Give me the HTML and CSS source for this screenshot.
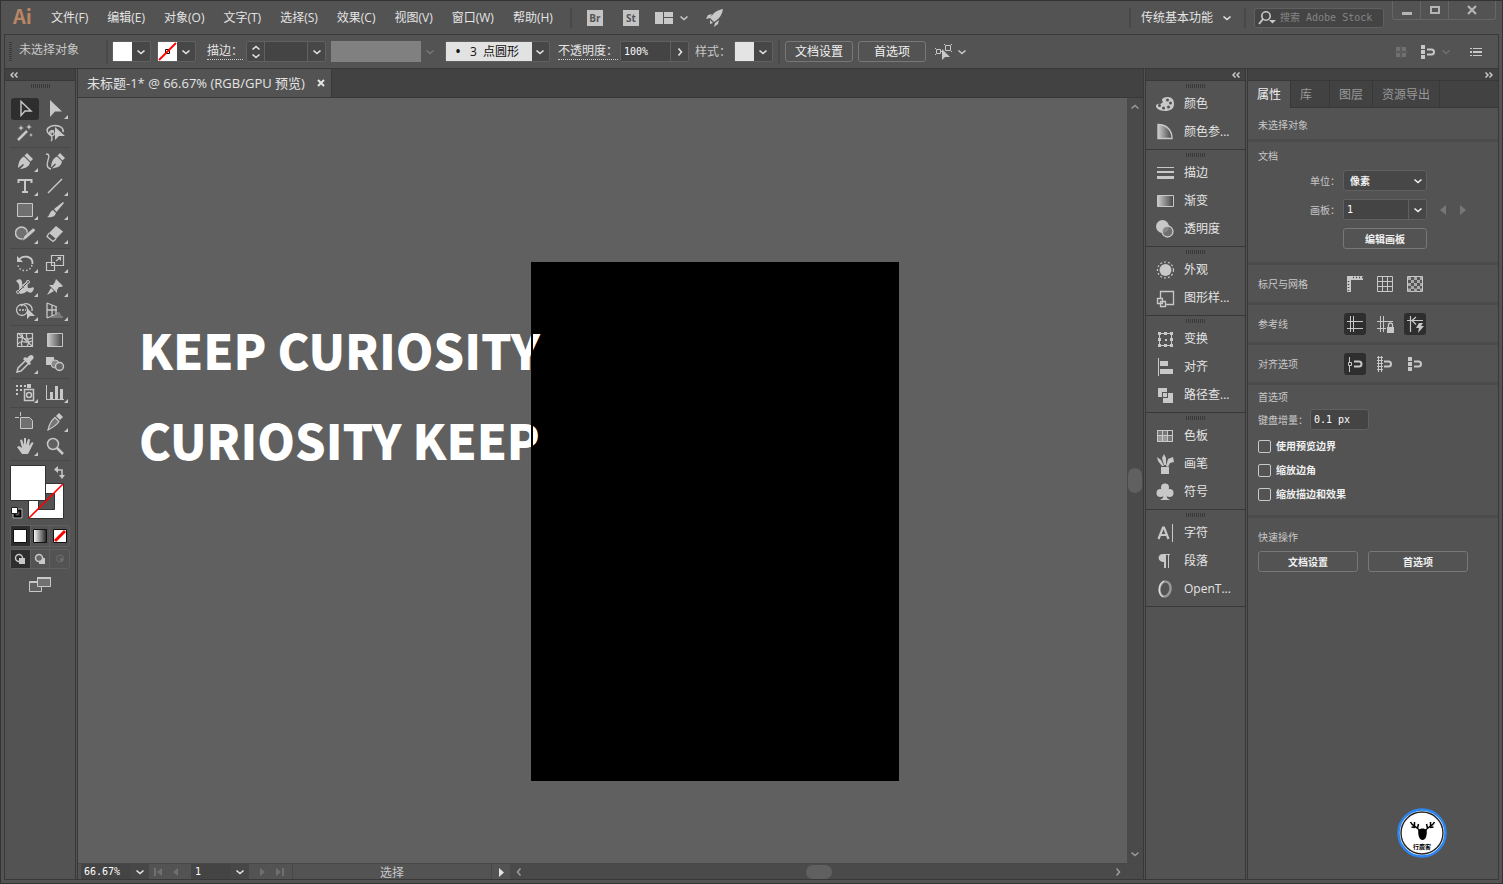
FILE: index.html
```html
<!DOCTYPE html>
<html lang="zh-CN">
<head>
    <meta charset="UTF-8">
    <meta name="viewport" content="width=device-width, initial-scale=1.0">
    <title>未标题-1* @ 66.67% (RGB/GPU 预览)</title>
    <link rel="stylesheet" href="styles.css">
</head>
<body>
    <!-- shared icons -->
    <svg class="defs" width="0" height="0" aria-hidden="true">
        <symbol id="down" viewBox="0 0 10 10"><path d="M1.500 3.500L5 6.500L8.500 3.500" fill="none" stroke="currentColor" stroke-width="1.600"/></symbol>
        <symbol id="right" viewBox="0 0 10 10"><path d="M3.500 1.500L6.500 5L3.500 8.500" fill="none" stroke="currentColor" stroke-width="1.600"/></symbol>
        <symbol id="left" viewBox="0 0 10 10"><path d="M6.500 1.500L3.500 5L6.500 8.500" fill="none" stroke="currentColor" stroke-width="1.600"/></symbol>
        <symbol id="up" viewBox="0 0 10 10"><path d="M1.500 6.500L5 3.500L8.500 6.500" fill="none" stroke="currentColor" stroke-width="1.600"/></symbol>
        <symbol id="collapse" viewBox="0 0 8 6"><path d="M3.500 .5L1 3l2.500 2.500M7.500 .5L5 3l2.500 2.500" fill="none" stroke="currentColor" stroke-width="1.500"/></symbol>
        <symbol id="expand" viewBox="0 0 8 6"><path d="M.5 .5L3 3L.5 5.500M4.500 .5L7 3L4.500 5.500" fill="none" stroke="currentColor" stroke-width="1.500"/></symbol>
        <symbol id="snap" viewBox="0 0 20 20"><path d="M3 3h4v4H3zM3 8h4v4H3zM3 13h4v4H3z"/><path d="M9 7.500h4.500a2.500 2.500 0 0 1 0 5H9" fill="none" stroke="currentColor" stroke-width="2"/></symbol>
        <linearGradient id="fade"><stop offset="0" stop-color="#ccc"/><stop offset="1" stop-color="#444"/></linearGradient>
        <linearGradient id="fadeWhite"><stop offset="0" stop-color="#fff"/><stop offset="1" stop-color="#222"/></linearGradient>
    </svg>

    <header class="menubar">
        <span class="logo">Ai</span>
        <nav class="menu">
            <button>文件(F)</button>
            <button>编辑(E)</button>
            <button>对象(O)</button>
            <button>文字(T)</button>
            <button>选择(S)</button>
            <button>效果(C)</button>
            <button>视图(V)</button>
            <button>窗口(W)</button>
            <button>帮助(H)</button>
        </nav>
        <div class="launch">
            <button class="badge">Br</button>
            <button class="badge">St</button>
            <button class="arrange" aria-label="排列文档"><svg width="18" height="12" viewBox="0 0 18 12"><path d="M0 0h8v12H0zM9 0h9v5H9zM9 6h9v6H9z"/></svg><svg width="10" height="10"><use href="#down"/></svg></button>
            <button aria-label="GPU 性能"><svg width="20" height="20" viewBox="0 0 20 20"><path d="M18 1C12 2 8 5 5 10l4 4c5-3 8-7 9-13zM7 6L3 7l-2 4 4-1zM14 12l-1 4-4 3 1-4zM5 12l3 3-3 1z"/></svg></button>
        </div>
        <div class="menubar-right">
            <button class="workspace-switch">传统基本功能 <svg width="10" height="10"><use href="#down"/></svg></button>
            <label class="search">
                <svg width="18" height="16" viewBox="0 0 18 16"><circle cx="8" cy="6" r="4.200" fill="none" stroke="currentColor" stroke-width="1.600"/><path d="M5 9l-4 5" stroke="currentColor" stroke-width="2"/><path d="M11 10h7l-3.500 3.500z"/></svg>
                <input type="text" placeholder="搜索 Adobe Stock" aria-label="搜索 Adobe Stock">
            </label>
            <div class="window-buttons">
                <button aria-label="最小化"><svg width="12" height="12" viewBox="0 0 12 12"><path d="M1 8h10v3H1z"/></svg></button>
                <button aria-label="最大化"><svg width="12" height="12" viewBox="0 0 12 12"><path d="M2 3h8v6H2z" fill="none" stroke="currentColor" stroke-width="2"/></svg></button>
                <button class="close" aria-label="关闭"><svg width="12" height="12" viewBox="0 0 12 12"><path d="M2 2l8 8M10 2l-8 8" stroke="currentColor" stroke-width="2.200"/></svg></button>
            </div>
        </div>
    </header>

    <div class="frame">
        <section class="control">
            <i class="grip-v"></i>
            <span class="selection">未选择对象</span>
            <button class="swatch" aria-label="填色"><i class="chip white"></i><svg width="10" height="10"><use href="#down"/></svg></button>
            <button class="swatch" aria-label="描边颜色"><i class="chip white"><svg width="19" height="19" viewBox="0 0 19 19"><path d="M7.500 7.500h4v4h-4z" fill="none" stroke="#111"/><path d="M1 18L18 1" stroke="#f00" stroke-width="1.800"/></svg></i><svg width="10" height="10"><use href="#down"/></svg></button>
            <label class="dotted" for="stroke">描边：</label>
            <span class="combo stroke">
                <button class="step" aria-label="增减"><svg width="10" height="8" viewBox="0 1 10 8"><use href="#up" width="10" height="10"/></svg><svg width="10" height="8" viewBox="0 1 10 8"><use href="#down" width="10" height="10"/></svg></button>
                <input id="stroke" type="text">
                <button aria-label="粗细"><svg width="10" height="10"><use href="#down"/></svg></button>
            </span>
            <button class="profile" aria-label="变量宽度" disabled><i></i><svg width="10" height="10"><use href="#down"/></svg></button>
            <button class="brush"><span><b>•</b>3<em>点圆形</em></span><svg width="10" height="10"><use href="#down"/></svg></button>
            <label class="dotted opacity-label" for="opacity">不透明度：</label>
            <span class="combo opacity"><input id="opacity" type="text" value="100%"><button aria-label="不透明度滑块"><svg width="10" height="10"><use href="#right"/></svg></button></span>
            <span class="style-label">样式：</span>
            <button class="swatch style-swatch" aria-label="图形样式"><i class="chip"></i><svg width="10" height="10"><use href="#down"/></svg></button>
            <div class="control-buttons">
                <button class="outline">文档设置</button>
                <button class="outline">首选项</button>
            </div>
            <button class="similar" aria-label="选择类似的对象"><svg width="18" height="18" viewBox="0 0 18 18"><path d="M1.500 6.500h4v4h-4zM10.500 2.500h5v5h-5zM5.500 8.500h2M0 5.500h1M0 11.500h1M9 1.500h1M16 1.500h1M16 8.500h1" fill="none" stroke="currentColor"/><path d="M7 6v11l3-3h5z"/></svg><svg width="10" height="10"><use href="#down"/></svg></button>
            <div class="control-right">
                <button class="dim" aria-label="对齐像素"><svg width="14" height="14" viewBox="0 0 14 14"><path d="M2 2h4v4H2zM8 2h4v4H8zM2 8h4v4H2zM8 8h4v4H8z"/><path d="M7 0v14M0 7h14" stroke="currentColor" opacity=".5"/></svg></button>
                <button aria-label="对齐"><svg width="20" height="20"><use href="#snap"/></svg></button>
                <button class="dim snap-menu" aria-label="对齐选项"><svg width="10" height="10"><use href="#down"/></svg></button>
                <button class="list" aria-label="面板菜单"><svg width="12" height="10" viewBox="0 0 12 10"><path d="M0 1h2v1H0zM3 1h9v1H3zM0 4h2v2H0zM3 4h9v2H3zM0 8h2v1H0zM3 8h9v1H3z"/></svg></button>
            </div>
        </section>

        <main class="workspace">
            <aside class="toolbox">
                <button class="dock-head" aria-label="折叠"><svg width="8" height="6"><use href="#collapse"/></svg></button>
                <i class="grip"></i>
                <div class="tools">
                    <button class="tool active" aria-label="选择工具"><svg viewBox="0 0 20 20"><path d="M6 2.500v14l4-4.500h6z" fill="none" stroke="currentColor" stroke-width="1.400"/></svg></button>
                    <button class="tool more" aria-label="直接选择工具"><svg viewBox="0 0 20 20"><path d="M5 1v17l5-5.500h7z"/></svg></button>
                    <button class="tool" aria-label="魔棒工具"><svg viewBox="0 0 20 20"><path d="M3 17L12 8" stroke="currentColor" stroke-width="2.500"/><path d="M6 2l.8 2.200L9 5l-2.200.8L6 8l-.8-2.200L3 5l2.200-.8zM14 1l.8 2.200L17 4l-2.200.8L14 7l-.8-2.200L11 4l2.200-.8zM16 10l.6 1.400L18 12l-1.400.6L16 14l-.6-1.400L14 12l1.400-.6z"/></svg></button>
                    <button class="tool" aria-label="套索工具"><svg viewBox="0 0 20 20"><path d="M4 11C-1 6 5 2.500 10 2.500S19 5 18 9" fill="none" stroke="currentColor" stroke-width="1.500"/><path d="M9 8C5 7 3 10 5 12s5 0 4-2-4-1-3 2 2 4 0 6" fill="none" stroke="currentColor" stroke-width="1.300"/><path d="M10 4v13l4-4h6z"/></svg></button>
                </div>
                <div class="tools">
                    <button class="tool more" aria-label="钢笔工具"><svg viewBox="0 0 20 20"><path d="M12 1l6 6-2.500 2.500-6-6zM9 4.500l6 6c-1 4-4 6-10 6.500L9 13l-1-1-5 4c.5-6 2-9.500 6-11.500z"/></svg></button>
                    <button class="tool" aria-label="曲率工具"><svg viewBox="0 0 20 20"><path d="M15 1l5 5-2.500 2.500-5-5zM12 4.500l5 5c-1 4-3 6-10 7l4-4-1-1-4 4c.5-6 2-9 6-11z"/><path d="M1 2c4 0 3 3 2 6-1 4-2 8 3 9" fill="none" stroke="currentColor" stroke-width="1.300"/></svg></button>
                    <button class="tool more" aria-label="文字工具"><svg viewBox="0 0 20 20"><path d="M3.500 7V4h13v3M10 4v12M7 16h6" fill="none" stroke="currentColor" stroke-width="2"/></svg></button>
                    <button class="tool more" aria-label="直线段工具"><svg viewBox="0 0 20 20"><path d="M3 17L17 3" stroke="currentColor" stroke-width="1.500"/></svg></button>
                    <button class="tool more" aria-label="矩形工具"><svg viewBox="0 0 20 20"><path d="M2.500 3.500h15v13h-15z" fill="#707070" stroke="currentColor"/></svg></button>
                    <button class="tool more" aria-label="画笔工具"><svg viewBox="0 0 20 20"><path d="M18 2L9 9l2.500 3L19 3zM8 10l3 3c-1 4-5 5-9 4 3-1 2-5 6-7z"/></svg></button>
                    <button class="tool more" aria-label="Shaper 工具"><svg viewBox="0 0 20 20"><circle cx="6.500" cy="9" r="6" fill="#707070" stroke="currentColor" stroke-width="1.500"/><path d="M7 17l2-5 9-8 3 2-10 9z" stroke="#535353" stroke-width=".6"/></svg></button>
                    <button class="tool more" aria-label="橡皮擦工具"><svg viewBox="0 0 20 20"><path d="M11 2l7 5.500-7 7.500-7-6z"/><path d="M4 9l-2 3.500 6 5 3-2.500" fill="none" stroke="currentColor" stroke-width="1.300"/></svg></button>
                </div>
                <div class="tools">
                    <button class="tool more" aria-label="旋转工具"><svg viewBox="0 0 20 20"><path d="M4 7c3-5 14-5 13.500 4" fill="none" stroke="currentColor" stroke-width="1.800"/><path d="M2 3v6h6z"/><path d="M17 12c-2 8-13 7-14 0" fill="none" stroke="currentColor" stroke-width="1.500" stroke-dasharray="1.500 2"/></svg></button>
                    <button class="tool more" aria-label="比例缩放工具"><svg viewBox="0 0 20 20"><path d="M6.500 2.500h12v10h-12zM1.500 9.500h8v8h-8zM11 8l5-4" fill="none" stroke="currentColor" stroke-width="1.200"/><path d="M12 4h4v4z"/></svg></button>
                    <button class="tool more" aria-label="宽度工具"><svg viewBox="0 0 20 20"><path d="M1 4c4-4 7-1 6 4 2-1 4-3 5-5l2 1c-2 5-2 7 0 7 2 1 3-2 5 0-1 5-4 6-7 3-3 3-7 4-9 1 2-4 2-8-2-11z"/><path d="M3 15L14 4" stroke="#444"/><circle cx="3" cy="15" r="1.500" fill="#535353" stroke="currentColor"/><circle cx="8" cy="10" r="1.500" fill="#535353" stroke="currentColor"/><circle cx="13" cy="5" r="1.500" fill="#535353" stroke="currentColor"/></svg></button>
                    <button class="tool more" aria-label="操控变形工具"><svg viewBox="0 0 20 20"><path d="M11 2l7 7-2 1-2 0-2 3v3l-8-8h4l2-3zM6 11l3 3-7 4z"/></svg></button>
                    <button class="tool more" aria-label="形状生成器工具"><svg viewBox="0 0 20 20"><circle cx="7" cy="9" r="5.500" fill="none" stroke="currentColor" stroke-width="1.300"/><path d="M6 5c5-5 12-1 11 5" fill="none" stroke="currentColor" stroke-width="1.300"/><path d="M4 9h7" stroke="currentColor" stroke-width="1.300" stroke-dasharray="2 1"/><path d="M12 7v11l3-3h5z"/></svg></button>
                    <button class="tool more" aria-label="透视网格工具"><svg viewBox="0 0 20 20"><path d="M2 2v15M7 4v11M11 6v8M2 2l10 4M2 9h10M2 17l10-4" fill="none" stroke="currentColor" stroke-width="1.300"/><path d="M12 12h3M10 14h6M6 16h12" stroke="#888" stroke-width="1.300"/></svg></button>
                </div>
                <div class="tools">
                    <button class="tool" aria-label="网格工具"><svg viewBox="0 0 20 20"><path d="M2.500 3.500h15v13h-15zM3 8c5-3 5 4 14 0M3 14c4-6 7 1 14-3M6 3c5 5-2 8 1 13M12 3c-3 5 5 8 0 13M3 3l14 13" fill="none" stroke="currentColor" stroke-width="1.200"/></svg></button>
                    <button class="tool" aria-label="渐变工具"><svg viewBox="0 0 20 20"><path d="M2.500 3.500h15v13h-15z" fill="url(#fade)" stroke="currentColor"/></svg></button>
                    <button class="tool more" aria-label="吸管工具"><svg viewBox="0 0 20 20"><path d="M10 7l-7 7-1 4 4-1 7-7" fill="none" stroke="currentColor" stroke-width="1.500"/><path d="M14 2c3-3 6 1 4 3l-3 3 1 2-2 1-6-6 2-2 2 1z"/></svg></button>
                    <button class="tool" aria-label="混合工具"><svg viewBox="0 0 20 20"><path d="M1 3h8v8H1z"/><circle cx="10" cy="10" r="4" fill="#888" stroke="currentColor"/><circle cx="14.500" cy="12.500" r="4" fill="#666" stroke="currentColor" stroke-width="1.400"/></svg></button>
                </div>
                <div class="tools">
                    <button class="tool more" aria-label="符号喷枪工具"><svg viewBox="0 0 20 20"><path d="M1 2h2v2H1zM5 2h2v2H5zM9 2h2v2H9zM1 6h2v2H1zM5 6h2v2H5zM1 10h2v2H1zM12 1h4v4h-4z"/><path d="M9.500 6.500h9v11h-9z" fill="none" stroke="currentColor" stroke-width="1.500"/><circle cx="14" cy="12" r="2.500" fill="none" stroke="currentColor" stroke-width="1.500"/></svg></button>
                    <button class="tool more" aria-label="柱形图工具"><svg viewBox="0 0 20 20"><path d="M1 2h1v14h17v1H1zM5 9h3v7H5zM10 3h3v13h-3zM15 6h3v10h-3z"/></svg></button>
                </div>
                <div class="tools">
                    <button class="tool" aria-label="画板工具"><svg viewBox="0 0 20 20"><path d="M5.500 0v4M0 5.500h4" stroke="currentColor"/><path d="M5.500 5.500h9l3 3v8h-12z" fill="#707070" stroke="currentColor"/></svg></button>
                    <button class="tool more" aria-label="切片工具"><svg viewBox="0 0 20 20"><path d="M14 1l4 4-3 3-4-4z"/><path d="M10 5.500L14 9.500Q11 14 3 18 5 9 10 5.500z" fill="#777" stroke="currentColor" stroke-width="1.200"/></svg></button>
                    <button class="tool more" aria-label="抓手工具"><svg viewBox="0 0 20 20"><path d="M7 18L2 11l2-1 3 2L5 4l2-.5L9 9V2h2v7l2-6 2 .5L14 10l3-4 1.500 1L15 14l-2 4z"/></svg></button>
                    <button class="tool" aria-label="缩放工具"><svg viewBox="0 0 20 20"><circle cx="8" cy="8" r="5.500" fill="#606060" stroke="currentColor" stroke-width="1.500"/><path d="M12 12l6 6" stroke="currentColor" stroke-width="2.500"/></svg></button>
                </div>
                <svg class="fill-stroke" width="60" height="60" viewBox="0 0 60 60">
                    <path d="M18.500 20.500h35v35h-35z" fill="#fff" stroke="#333"/>
                    <path d="M28.500 30.500h16v16h-16z" fill="#535353" stroke="#333"/>
                    <path d="M19 55L53 21" stroke="#f00" stroke-width="1.600"/>
                    <path d="M.5 2.500h35v35H.5z" fill="#fff" stroke="#333"/>
                    <path d="M47 7h5v6" fill="none" stroke="#c8c8c8" stroke-width="1.500"/>
                    <path d="M48 3v7l-4-3.500zM49 12h6l-3 4z" fill="#c8c8c8"/>
                    <path d="M4.500 47.500h6v6h-6z" fill="none" stroke="#000" stroke-width="2"/>
                    <path d="M3 46h9v9H3z" fill="none" stroke="#bbb" stroke-width=".8"/>
                    <path d="M1.500 44.500h6v6h-6z" fill="#fff" stroke="#222"/>
                </svg>
                <div class="modes">
                    <button class="on" aria-label="颜色"><svg width="14" height="14" viewBox="0 0 14 14"><path d="M.5 .5h13v13H.5z" fill="#fff" stroke="#111"/></svg></button>
                    <button aria-label="渐变"><svg width="14" height="14" viewBox="0 0 14 14"><path d="M.5 .5h13v13H.5z" fill="url(#fadeWhite)" stroke="#111"/></svg></button>
                    <button aria-label="无"><svg width="14" height="14" viewBox="0 0 14 14"><path d="M.5 .5h13v13H.5z" fill="#fff" stroke="#111"/><path d="M2 12L12 2" stroke="#f00" stroke-width="3"/></svg></button>
                </div>
                <div class="modes small">
                    <button class="on" aria-label="正常绘图"><svg width="12" height="12" viewBox="0 0 12 12"><circle cx="5" cy="5" r="3.500" fill="none" stroke="currentColor" stroke-width="1.500"/><path d="M5 5h6v6H5z"/></svg></button>
                    <button aria-label="背面绘图"><svg width="12" height="12" viewBox="0 0 12 12"><path d="M5 5h6v6H5z"/><circle cx="5" cy="5" r="3.500" fill="#666" stroke="currentColor" stroke-width="1.500"/></svg></button>
                    <button class="dim" aria-label="内部绘图" disabled><svg width="12" height="12" viewBox="0 0 12 12"><circle cx="6" cy="5.500" r="3.500" fill="none" stroke="currentColor"/><path d="M6 5h3v3H6z"/></svg></button>
                </div>
                <button class="screen-mode" aria-label="更改屏幕模式"><svg width="22" height="17" viewBox="0 0 22 17"><path d="M.5 5.500h12v10H.5z" fill="#606060" stroke="currentColor"/><path d="M8.500 1.500h13v9h-13z" fill="#707070" stroke="currentColor"/><path d="M1 5h7v2H1zM8 1h14v2H8z"/></svg></button>
            </aside>

            <section class="document">
                <div class="doc-tabs">
                    <div class="doc-tab">未标题-1* @ 66.67% (RGB/GPU 预览)<button aria-label="关闭文档"><svg width="8" height="8" viewBox="0 0 8 8"><path d="M1 1l6 6M7 1l-6 6" stroke="currentColor" stroke-width="2"/></svg></button></div>
                </div>
                <div class="view">
                    <div class="canvas">
                        <div class="artboard"></div>
                        <p class="art-text first">KEEP CURIOSITY</p>
                        <p class="art-text second">CURIOSITY KEEP</p>
                        <i class="artboard-edge"></i>
                    </div>
                    <div class="scroll-v">
                        <svg width="10" height="10"><use href="#up"/></svg>
                        <i></i>
                        <svg width="10" height="10"><use href="#down"/></svg>
                    </div>
                </div>
                <footer class="status">
                    <input class="zoom" type="text" value="66.67%" aria-label="缩放">
                    <button class="drop" aria-label="缩放级别"><svg width="10" height="10"><use href="#down"/></svg></button>
                    <button class="nav" aria-label="首项" disabled><svg width="10" height="10" viewBox="0 0 10 10"><path d="M1 1h2v8H1zM9 1v8L4 5z"/></svg></button>
                    <button class="nav" aria-label="上一项" disabled><svg width="10" height="10" viewBox="0 0 10 10"><path d="M7 1v8L2 5z"/></svg></button>
                    <input class="page" type="text" value="1" aria-label="画板导航">
                    <button class="drop" aria-label="画板列表"><svg width="10" height="10"><use href="#down"/></svg></button>
                    <button class="nav" aria-label="下一项" disabled><svg width="10" height="10" viewBox="0 0 10 10"><path d="M3 1v8l5-4z"/></svg></button>
                    <button class="nav" aria-label="末项" disabled><svg width="10" height="10" viewBox="0 0 10 10"><path d="M7 1h2v8H7zM1 1v8l5-4z"/></svg></button>
                    <span class="current">选择</span>
                    <button class="play" aria-label="显示"><svg width="10" height="10" viewBox="0 0 10 10"><path d="M3 1v9l5-4.500z"/></svg></button>
                    <div class="scroll-h">
                        <svg width="10" height="10"><use href="#left"/></svg>
                        <i></i>
                        <svg width="10" height="10"><use href="#right"/></svg>
                    </div>
                </footer>
            </section>

            <aside class="dock">
                <button class="dock-head" aria-label="展开面板"><svg width="8" height="6"><use href="#collapse"/></svg></button>
                <div class="dock-group">
                    <i class="grip"></i>
                    <button><svg viewBox="0 0 20 20"><path fill-rule="evenodd" d="M13 3c4 0 6 3 6 7 0 5-4 7-9 7-6 0-9-3-9-5 0-3 4-1 6-3S7 8 7 6s3-3 6-3zM3 11.500a1.500 1.500 0 1 0 3 0 1.500 1.500 0 1 0-3 0zM7 14a1.500 1.500 0 1 0 3 0 1.500 1.500 0 1 0-3 0zM12 13a1.500 1.500 0 1 0 3 0 1.500 1.500 0 1 0-3 0zM14 9a1.500 1.500 0 1 0 3 0 1.500 1.500 0 1 0-3 0zM11 6a1.500 1.500 0 1 0 3 0 1.500 1.500 0 1 0-3 0z"/></svg>颜色</button>
                    <button><svg viewBox="0 0 20 20"><path d="M3 2.500c9 0 14 6 14 14H3z" fill="url(#fade)" stroke="currentColor" stroke-width="1.400"/></svg>颜色参...</button>
                </div>
                <div class="dock-group">
                    <i class="grip"></i>
                    <button><svg viewBox="0 0 20 20"><path d="M2 4h17v1H2zM2 8h17v2H2zM2 13h17v3H2z"/></svg>描边</button>
                    <button><svg viewBox="0 0 20 20"><path d="M2.500 4.500h16v11h-16z" fill="url(#fade)" stroke="currentColor"/></svg>渐变</button>
                    <button><svg viewBox="0 0 20 20"><circle cx="7.500" cy="7.500" r="6.500"/><circle cx="12.500" cy="12.500" r="5.500" fill="#777" fill-opacity=".8" stroke="currentColor" stroke-width="1.300"/></svg>透明度</button>
                </div>
                <div class="dock-group">
                    <i class="grip"></i>
                    <button><svg viewBox="0 0 20 20"><circle cx="10.500" cy="10" r="6"/><circle cx="10.500" cy="10" r="8" fill="none" stroke="currentColor" stroke-width="1.200" stroke-dasharray="2 2"/></svg>外观</button>
                    <button><svg viewBox="0 0 20 20"><path d="M5.500 10V3.500h13v13H11M2.500 10.500h5v5h-5zM5.500 13.500h5v5h-5z" fill="none" stroke="currentColor" stroke-width="1.300"/></svg>图形样...</button>
                </div>
                <div class="dock-group">
                    <i class="grip"></i>
                    <button><svg viewBox="0 0 20 20"><path d="M4.500 4.500h12v12h-12z" fill="none" stroke="currentColor"/><path d="M3 3h3v3H3zM9 3h3v3H9zM15 3h3v3h-3zM3 9h3v3H3zM15 9h3v3h-3zM3 15h3v3H3zM9 15h3v3H9zM15 15h3v3h-3zM10 10h2v2h-2z"/></svg>变换</button>
                    <button><svg viewBox="0 0 20 20"><path d="M3 1h1v18H3zM5 4h8v5H5zM5 12h13v5H5z"/></svg>对齐</button>
                    <button><svg viewBox="0 0 20 20"><path d="M3 3h9v4H7v5H3zM13 8h5v10H8v-5h5z"/><path d="M8 8h4v4H8z"/></svg>路径查...</button>
                </div>
                <div class="dock-group">
                    <i class="grip"></i>
                    <button><svg viewBox="0 0 20 20"><path d="M2 4h16v12H2z"/><path d="M3 5h4v4H3zM8 5h4v4H8zM13 10h4v5h-4z" fill="#777"/><path d="M13 5h4v4h-4z" fill="#555"/><path d="M3 10h4v5H3zM8 10h4v5H8z" fill="#999"/></svg>色板</button>
                    <button><svg viewBox="0 0 20 20"><path d="M6 13h8v7H6zM7 12L3 7 2 3l4 3 3 6zM9 11L7 4l2-4 2 4v7zM11 12l2-7 5-2 1 5-4 1-2 4z"/></svg>画笔</button>
                    <button><svg viewBox="0 0 20 20"><circle cx="10" cy="5.500" r="4"/><circle cx="5.500" cy="11" r="4"/><circle cx="14.500" cy="11" r="4"/><path d="M9 8h2l1 8 3 2H5l3-2z"/></svg>符号</button>
                </div>
                <div class="dock-group">
                    <i class="grip"></i>
                    <button><svg viewBox="0 0 20 20"><path d="M3.500 16L8 4.500h1L13.500 16M5 12h7" fill="none" stroke="currentColor" stroke-width="2.200"/><path d="M17 1h1v18h-1z"/></svg>字符</button>
                    <button><svg viewBox="0 0 20 20"><path d="M8 3h7v1H8zM8 3h3v14H9v-6c-7 0-7-8-1-8zM13 3h1v14h-1z"/></svg>段落</button>
                    <button><svg viewBox="0 0 20 20"><ellipse cx="10" cy="10" rx="5.500" ry="7.500" fill="none" stroke="#999" stroke-width="2.500" transform="rotate(10 10 10)"/><path d="M9 2C3 5 3 15 8 18" fill="none" stroke="#ddd" stroke-width="1.300"/></svg>OpenT...</button>
                </div>
            </aside>

            <aside class="props">
                <button class="dock-head" aria-label="折叠面板"><svg width="8" height="6"><use href="#expand"/></svg></button>
                <div class="tabs">
                    <button class="selected">属性</button>
                    <button class="lib">库</button>
                    <button>图层</button>
                    <button>资源导出</button>
                </div>
                <section class="target">未选择对象</section>
                <section class="doc-props">
                    <h2>文档</h2>
                    <div class="field"><label for="unit">单位：</label><span class="select"><select id="unit"><option>像素</option></select><svg width="10" height="10"><use href="#down"/></svg></span></div>
                    <div class="field"><label for="board">画板：</label><span class="combo board"><input id="board" type="text" value="1"><button aria-label="选择画板"><svg width="10" height="10"><use href="#down"/></svg></button></span>
                        <button class="tri" disabled aria-label="上一画板"><svg width="8" height="10" viewBox="0 0 8 10"><path d="M7 0v10L1 5z"/></svg></button>
                        <button class="tri" disabled aria-label="下一画板"><svg width="8" height="10" viewBox="0 0 8 10"><path d="M1 0v10l6-5z"/></svg></button>
                    </div>
                    <button class="outline edit-board">编辑画板</button>
                </section>
                <section class="icon-row">
                    <h2>标尺与网格</h2>
                    <button aria-label="标尺"><svg viewBox="0 0 20 20"><path d="M2 2h16v4H6v12H2z"/><path d="M8 3.500h10M3.500 7v11" stroke="#444" stroke-width="1.500" stroke-dasharray="1 2"/></svg></button>
                    <button aria-label="网格"><svg viewBox="0 0 20 20"><path d="M2.500 2.500h15v15h-15zM7.500 2v16M12.500 2v16M2 7.500h16M2 12.500h16" fill="none" stroke="currentColor"/></svg></button>
                    <button aria-label="透明度网格"><svg viewBox="0 0 20 20"><path d="M2.500 2.500h15v15h-15z" fill="#555" stroke="currentColor"/><path d="M3 4.500h14M3 10.500h14M3 16h14" stroke="#aaa" stroke-width="3" stroke-dasharray="3 3"/><path d="M6 7.500h11M6 13.500h11" stroke="#aaa" stroke-width="3" stroke-dasharray="3 3"/></svg></button>
                </section>
                <section class="icon-row">
                    <h2>参考线</h2>
                    <button class="on" aria-label="显示参考线"><svg viewBox="0 0 20 20"><path d="M5.500 2v16M8.500 2v16M2 7.500h16M2 14.500h16" stroke="currentColor"/></svg></button>
                    <button aria-label="锁定参考线"><svg viewBox="0 0 20 20"><path d="M5.500 2v16M8.500 2v16M2 7.500h16M2 14.500h9" stroke="currentColor"/><path d="M12 13h7v6h-7z"/><path d="M13.500 13v-2a2 2 0 0 1 4 0v2" fill="none" stroke="currentColor" stroke-width="1.300"/></svg></button>
                    <button class="on" aria-label="智能参考线"><svg viewBox="0 0 20 20"><path d="M5.500 2v16M2 6.500h16M11 3L7 6.500l4 4" fill="none" stroke="currentColor" stroke-width="1.200"/><path d="M14 9h4l-2 3h3l-6 7 1-5h-3z"/></svg></button>
                </section>
                <section class="icon-row">
                    <h2>对齐选项</h2>
                    <button class="on" aria-label="对齐点"><svg viewBox="0 0 20 20"><path d="M4.500 3v5M4.500 12v6M3.500 8.500h3v3h-3z" fill="none" stroke="currentColor"/><path d="M9 7.500h5a2.500 2.500 0 0 1 0 5H9" fill="none" stroke="currentColor" stroke-width="2"/></svg></button>
                    <button aria-label="对齐网格"><svg viewBox="0 0 20 20"><path d="M3.500 2v16M6.500 2v16M2 3.500h6M2 6.500h6M2 9.500h6M2 12.500h6M2 15.500h6" stroke="currentColor"/><path d="M9 7.500h4.500a2.500 2.500 0 0 1 0 5H9" fill="none" stroke="currentColor" stroke-width="2"/></svg></button>
                    <button aria-label="对齐像素"><svg viewBox="0 0 20 20"><use href="#snap" width="20" height="20"/></svg></button>
                </section>
                <section class="prefs">
                    <h2>首选项</h2>
                    <div class="increment"><label for="inc">键盘增量：</label><input id="inc" type="text" value="0.1 px"></div>
                    <label class="check"><input type="checkbox">使用预览边界</label>
                    <label class="check"><input type="checkbox">缩放边角</label>
                    <label class="check"><input type="checkbox">缩放描边和效果</label>
                </section>
                <section class="quick">
                    <h2>快速操作</h2>
                    <div class="quick-buttons">
                        <button class="outline">文档设置</button>
                        <button class="outline">首选项</button>
                    </div>
                </section>
                <svg class="deer" width="50" height="50" viewBox="0 0 50 50">
                    <circle cx="25" cy="25" r="23.500" fill="#fff" stroke="#2d86f0" stroke-width="2.500"/>
                    <circle cx="25" cy="25" r="21" fill="none" stroke="#222" stroke-width="1.400"/>
                    <path d="M21.500 22c2-2 6-2 8 0 1 5-1 10-4 10s-5-5-4-10z"/>
                    <path d="M22.500 23c-1-4-7-4-9-9M18 19.500l-3.500-.5M17.500 18.500V14M20.500 20l1-4M28.500 23c1-4 7-4 9-9M33 19.500l3.500-.5M33.500 18.500V14M30.500 20l-1-4" fill="none" stroke="#000" stroke-width="1.500"/>
                    <text x="25" y="40.500" text-anchor="middle">行鹿客</text>
                </svg>
            </aside>
        </main>
    </div>
</body>
</html>
```
FILE: styles.css
```css
* {
    box-sizing: border-box;
}

body {
    display: flex;
    flex-direction: column;
    min-height: 100vh;
    margin: 0;
    padding: 0 3px 3px;
    border: 1px solid #333;
    background: #535353;
    color: #e4e4e4;
    font: 12px/16px "Open Sans", "Noto Sans CJK SC", sans-serif;
}

button, input, select {
    margin: 0;
    padding: 0;
    border: 0;
    background: none;
    color: inherit;
    font: inherit;
}

button {
    display: flex;
    align-items: center;
    justify-content: center;
    white-space: nowrap;
}

input[type="text"] {
    min-width: 0;
    background: #444;
    color: #fff;
    font: 10px/16px "DejaVu Sans Mono", "Noto Sans CJK SC", monospace;
}

svg {
    flex: none;
    fill: currentColor;
}

h2 {
    margin: 0;
    font-size: 10px;
    font-weight: normal;
    line-height: 16px;
}

.defs {
    position: absolute;
}

.dim {
    color: #777;
}

/* Menu bar */
.menubar {
    display: flex;
    align-items: center;
    height: 33px;
}

.logo {
    width: 47px;
    padding-left: 9px;
    padding-bottom: 4px;
    color: #b98565;
    font: bold 20px/24px "Noto Sans CJK SC", sans-serif;
}

.menu {
    display: flex;
    gap: 19px;
}

.launch {
    display: flex;
    align-items: center;
    gap: 20px;
    height: 20px;
    margin-left: 17px;
    padding-left: 15px;
    border-left: 2px solid #484848;
    color: #c8c8c8;
}

.badge {
    width: 16px;
    height: 16px;
    background: #c4c4c4;
    color: #555;
    font-size: 10px;
    font-weight: bold;
}

.arrange {
    gap: 6px;
    margin-right: -4px;
    margin-left: -4px;
}

.menubar-right {
    display: flex;
    align-items: center;
    height: 100%;
    margin-left: auto;
    padding-right: 3px;
}

.workspace-switch {
    gap: 9px;
    height: 20px;
    padding: 0 12px 0 10px;
    border: solid #484848;
    border-width: 0 2px;
}

.search {
    display: flex;
    align-items: center;
    width: 130px;
    height: 20px;
    margin: 0 8px;
    padding: 0 4px 0 3px;
    border: 1px solid #606060;
    border-radius: 3px;
    background: #444;
    color: #c8c8c8;
}

.search input {
    flex: 1;
    padding-left: 4px;
}

.search input::placeholder {
    color: #858585;
}

.window-buttons {
    display: flex;
    align-self: flex-start;
    border: 1px solid #666;
    border-top: 0;
    border-radius: 0 0 3px 3px;
    color: #b4b4b4;
}

.window-buttons button {
    width: 28px;
    height: 18px;
    border-right: 1px solid #666;
}

.window-buttons .close {
    width: 46px;
    border-right: 0;
}

/* Control bar */
.frame {
    display: flex;
    flex: 1;
    flex-direction: column;
    border: 1px solid #383838;
}

.control {
    display: flex;
    align-items: center;
    height: 34px;
    padding-left: 4px;
    border-bottom: 1px solid #383838;
    white-space: nowrap;
}

.grip-v {
    width: 3px;
    height: 19px;
    background: repeating-linear-gradient(#3a3a3a 0 1px, transparent 1px 2px);
}

.selection {
    width: 89px;
    height: 24px;
    margin: 0 4px 0 7px;
    padding-top: 2px;
    border-right: 2px solid #4a4a4a;
    color: #c8c8c8;
}

.swatch {
    height: 21px;
    margin-right: 6px;
    padding-right: 4px;
    border: 1px solid #606060;
    border-radius: 2px;
    background: #474747;
    gap: 4px;
}

.chip {
    width: 19px;
    height: 19px;
    background: #e4e4e4;
}

.chip.white {
    background: #fff;
}

.dotted {
    width: 36px;
    margin: 0 3px 0 5px;
    border-bottom: 1px dotted #ccc;
}

.combo {
    display: flex;
    height: 21px;
    border: 1px solid #606060;
    border-radius: 2px;
    background: #474747;
}

.combo input {
    flex: 1;
    padding-left: 3px;
}

.combo button {
    width: 18px;
    border-left: 1px solid #606060;
}

.combo .step {
    flex-direction: column;
    border-right: 1px solid #606060;
    border-left: 0;
}

.stroke {
    width: 80px;
}

.profile {
    gap: 4px;
    margin: 0 10px 0 5px;
    color: #777;
}

.profile i {
    width: 90px;
    height: 21px;
    background: #808080;
}

.brush {
    width: 105px;
    height: 21px;
    padding-right: 4px;
    border: 1px solid #606060;
    border-radius: 2px;
    background: #474747;
    justify-content: space-between;
}

.brush span {
    display: flex;
    gap: 6px;
    width: 86px;
    height: 19px;
    padding-left: 6px;
    background: #e2e2e2;
    color: #111;
    line-height: 19px;
}

.brush b {
    width: 12px;
}

.brush em {
    font-style: normal;
}

.dotted.opacity-label {
    width: 60px;
    margin: 0 2px 0 8px;
}

.opacity {
    width: 69px;
}

.style-label {
    width: 39px;
    margin-left: 6px;
    color: #c8c8c8;
}

.style-swatch {
    margin-right: 5px;
}

.control-buttons {
    display: flex;
    align-items: center;
    gap: 5px;
    height: 24px;
    padding-left: 5px;
    border-left: 2px solid #4a4a4a;
}

.outline {
    height: 21px;
    border: 1px solid #777;
    border-radius: 3px;
    color: #f0f0f0;
}

.control-buttons .outline {
    width: 68px;
}

.similar {
    gap: 4px;
    margin-left: 9px;
    color: #c8c8c8;
}

.control-right {
    display: flex;
    align-items: center;
    gap: 3px;
    margin-left: auto;
    padding-right: 16px;
    color: #c8c8c8;
}

.control-right .dim {
    color: #707070;
}

.control-right .dim + button {
    margin-left: 7px;
}

.control-right .snap-menu + .list {
    margin-left: 16px;
}

/* Workspace */
.workspace {
    display: flex;
    flex: 1;
}

.dock-head {
    width: 100%;
    height: 12px;
    border-bottom: 1px solid #383838;
    background: #424242;
    color: #c8c8c8;
}

.grip {
    display: block;
    width: 19px;
    height: 4px;
    margin: 3px auto 2px;
    background: repeating-linear-gradient(90deg, #3a3a3a 0 1px, transparent 1px 2px);
}

.toolbox {
    width: 71px;
    border-right: 1px solid #383838;
}

.toolbox .dock-head {
    justify-content: flex-start;
    padding-left: 5px;
}

.toolbox .grip {
    margin-bottom: 9px;
}

.tools {
    display: grid;
    grid-template-columns: 30px 30px;
    margin: 0 5px 2px;
    padding-bottom: 2px;
    border-bottom: 1px solid #484848;
}

.tool {
    position: relative;
    height: 24px;
    color: #c8c8c8;
}

.tool svg {
    width: 20px;
    height: 20px;
}

.tool.active {
    height: 22px;
    margin: 1px;
    border-radius: 3px;
    background: #2e2e2e;
}

.tool.more::after {
    content: "";
    position: absolute;
    right: 2px;
    bottom: 2px;
    border: 2px solid;
    border-color: transparent currentColor currentColor transparent;
}

.fill-stroke {
    display: block;
    margin-left: 5px;
}

.modes {
    display: flex;
    width: 60px;
    height: 22px;
    margin: 2px 5px;
    border: 1px solid #606060;
    border-radius: 3px;
    color: #c8c8c8;
}

.modes button {
    flex: 1;
}

.modes button + button {
    border-left: 1px solid #606060;
}

.modes .on {
    background: #2e2e2e;
}

.modes .dim {
    color: #6c6c6c;
}

.modes.small {
    height: 20px;
}

.screen-mode {
    margin: 7px 0 0 24px;
    color: #c8c8c8;
}

/* Document window */
.document {
    display: flex;
    flex: 1;
    flex-direction: column;
    min-width: 0;
    margin: 0 1px;
    border: solid #383838;
    border-width: 0 1px;
}

.doc-tabs {
    display: flex;
    height: 29px;
    border-bottom: 1px solid #383838;
    background: #424242;
}

.doc-tab {
    display: flex;
    align-items: center;
    gap: 12px;
    padding: 0 6px 0 9px;
    border-right: 1px solid #383838;
    background: #535353;
    font-size: 13px;
    white-space: nowrap;
}

.view {
    display: flex;
    flex: 1;
}

.canvas {
    position: relative;
    flex: 1;
    background: #606060;
    overflow: hidden;
}

.artboard {
    position: absolute;
    top: 164px;
    left: 453px;
    width: 368px;
    height: 519px;
    background: #000;
}

/* the page outline is drawn over the artwork */
.artboard-edge {
    position: absolute;
    top: 164px;
    left: 453px;
    width: 2px;
    height: 519px;
    background: #000;
}

.art-text {
    position: absolute;
    left: 61px;
    margin: 0;
    color: #fff;
    font: 900 48px/60px "Noto Sans CJK SC", sans-serif;
    white-space: nowrap;
}

.first {
    top: 221px;
}

.second {
    top: 311px;
}

.scroll-v {
    display: flex;
    flex-direction: column;
    align-items: center;
    justify-content: space-between;
    width: 16px;
    padding: 4px 0;
    background: #4a4a4a;
    color: #999;
}

.scroll-v i {
    width: 14px;
    height: 25px;
    border-radius: 7px;
    background: #606060;
}

.status {
    display: flex;
    height: 16px;
    padding-left: 3px;
    border-top: 1px solid #484848;
}

.status .zoom {
    width: 50px;
    padding-left: 3px;
}

.status .drop {
    width: 18px;
    background: #474747;
}

.status .nav {
    width: 18px;
    color: #707070;
}

.status .page {
    width: 40px;
    margin-left: 6px;
    padding-left: 4px;
}

.status .page + .drop {
    margin-right: 4px;
}

.status .current {
    width: 200px;
    margin-left: 3px;
    border: solid #484848;
    border-width: 0 1px;
    color: #c8c8c8;
    line-height: 18px;
    text-align: center;
}

.status .play {
    width: 18px;
}

.scroll-h {
    display: flex;
    flex: 1;
    align-items: center;
    justify-content: space-between;
    padding: 0 20px 0 4px;
    background: #4a4a4a;
    color: #999;
}

.scroll-h i {
    width: 26px;
    height: 14px;
    border-radius: 7px;
    background: #606060;
}

/* Collapsed panels */
.dock {
    width: 101px;
    border: solid #383838;
    border-width: 0 1px;
}

.dock .dock-head,
.props .dock-head {
    justify-content: flex-end;
    padding-right: 5px;
}

.dock-group {
    padding: 1px 0 3px;
    border-bottom: 1px solid #383838;
}

.dock-group .grip {
    margin-top: 2px;
}

.dock-group button {
    gap: 9px;
    width: 100%;
    height: 28px;
    padding-left: 9px;
    justify-content: flex-start;
    line-height: 18px;
}

.dock-group svg {
    width: 20px;
    height: 20px;
    color: #c8c8c8;
}

/* Properties */
.props {
    position: relative;
    width: 251px;
    margin-left: 1px;
    border-left: 1px solid #383838;
    color: #c8c8c8;
    font-size: 10px;
}

.tabs {
    display: flex;
    height: 27px;
    background: #424242;
    box-shadow: inset 0 -1px #383838;
    font-size: 12px;
}

.tabs button {
    padding: 0 9px;
    border-right: 1px solid #383838;
    color: #999;
}

.tabs .selected {
    background: #535353;
    color: #f0f0f0;
}

.tabs .lib {
    padding-right: 17px;
}

.props section {
    padding-left: 10px;
    border-bottom: 3px solid #4b4b4b;
}

.props .target {
    height: 34px;
    line-height: 34px;
}

.doc-props {
    height: 123px;
    padding-top: 6px;
}

.field {
    display: flex;
    align-items: center;
    height: 21px;
    margin: 6px 0 8px;
}

.field + .field {
    margin: 0 0 8px;
}

.field label {
    width: 85px;
    padding-left: 52px;
    white-space: nowrap;
}

.select {
    position: relative;
    width: 84px;
}

.select select {
    width: 100%;
    height: 21px;
    padding-left: 6px;
    border: 1px solid #606060;
    border-radius: 3px;
    background: #474747;
    color: #f0f0f0;
    font-weight: bold;
    appearance: none;
}

.select svg {
    position: absolute;
    top: 6px;
    right: 4px;
    color: #f0f0f0;
    pointer-events: none;
}

.board {
    width: 84px;
    color: #f0f0f0;
}

.tri {
    margin-left: 12px;
    color: #777;
}

.props .outline {
    font-weight: bold;
}

.edit-board {
    width: 84px;
    margin-left: 85px;
}

.icon-row {
    display: flex;
    align-items: center;
    gap: 8px;
    height: 40px;
}

.icon-row h2 {
    width: 78px;
}

.icon-row button {
    width: 22px;
    height: 22px;
    border-radius: 3px;
}

.icon-row .on {
    background: #2e2e2e;
}

.icon-row svg {
    width: 20px;
    height: 20px;
}

.prefs {
    height: 133px;
    padding-top: 4px;
}

.increment {
    display: flex;
    align-items: center;
    height: 21px;
    margin: 4px 0;
}

.increment label {
    width: 52px;
    white-space: nowrap;
}

.increment input {
    width: 59px;
    height: 21px;
    padding-left: 3px;
    border: 1px solid #606060;
    border-radius: 3px;
}

.check {
    display: flex;
    align-items: center;
    gap: 5px;
    height: 24px;
    color: #f0f0f0;
    font-weight: bold;
}

.check input {
    width: 13px;
    height: 13px;
    margin: 0;
    border: 1px solid #c8c8c8;
    border-radius: 2px;
    appearance: none;
}

.props .quick {
    padding-top: 11px;
    border-bottom: 0;
}

.quick-buttons {
    display: flex;
    gap: 10px;
    margin-top: 6px;
}

.quick-buttons .outline {
    width: 100px;
}

.deer {
    position: absolute;
    right: 51px;
    bottom: 21px;
    fill: #000;
    font: bold 6px "Noto Sans CJK SC", sans-serif;
}
```
